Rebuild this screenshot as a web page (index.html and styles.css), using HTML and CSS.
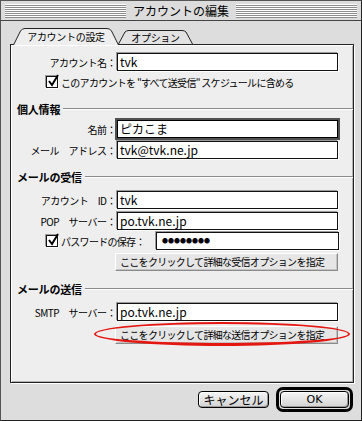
FILE: index.html
```html
<!DOCTYPE html>
<html lang="ja">
<head>
    <meta charset="UTF-8">
    <title>アカウントの編集</title>
    <link rel="stylesheet" href="styles.css">
</head>
<body>
    <div class="window">
        <div class="titlebar">
            <span class="stripes"></span>
            <span class="title">アカウントの編集</span>
            <span class="stripes"></span>
        </div>

        <div class="content">
            <div class="tabs">
                <div class="tab tab-front">
                    <svg class="tab-shape" width="106" height="17" viewBox="0 0 106 17">
                        <path d="M0.5,17 L7.5,3 Q9,0.5 12,0.5 L94,0.5 Q97,0.5 98.5,3 L105.5,17" fill="#eeeeee" stroke="#222"/>
                    </svg>
                    <span class="tab-label">アカウントの設定</span>
                </div>
                <div class="tab tab-back">
                    <svg class="tab-shape" width="75" height="16" viewBox="0 0 75 16">
                        <path d="M0.5,16 L7,4 Q8.5,2.5 11,2.5 L64,2.5 Q66.5,2.5 68,4 L74.5,16" fill="#e2e2e2" stroke="#222"/>
                    </svg>
                    <span class="tab-label">オプション</span>
                </div>
            </div>

            <div class="pane">
                <div class="row first">
                    <span class="label">アカウント名：</span>
                    <span class="field">tvk</span>
                </div>
                <div class="row check-row">
                    <span class="checkbox">
                        <svg width="14" height="14" viewBox="0 0 14 14"><path d="M3,7 L6,11 L12,1" fill="none" stroke="#000" stroke-width="2"/></svg>
                    </span>
                    <span class="check-text">このアカウントを "すべて送受信" スケジュールに含める</span>
                </div>

                <div class="section personal"><span class="section-title">個人情報</span></div>
                <div class="row name-row">
                    <span class="label">名前：</span>
                    <span class="field focused">ピカこま</span>
                </div>
                <div class="row tight">
                    <span class="label">メール　アドレス：</span>
                    <span class="field">tvk@tvk.ne.jp</span>
                </div>

                <div class="section"><span class="section-title">メールの受信</span></div>
                <div class="row after-section">
                    <span class="label">アカウント　ID：</span>
                    <span class="field">tvk</span>
                </div>
                <div class="row tight">
                    <span class="label">POP　サーバー：</span>
                    <span class="field">po.tvk.ne.jp</span>
                </div>
                <div class="row tight check-row">
                    <span class="checkbox">
                        <svg width="14" height="14" viewBox="0 0 14 14"><path d="M3,7 L6,11 L12,1" fill="none" stroke="#000" stroke-width="2"/></svg>
                    </span>
                    <span class="check-text">パスワードの保存：</span>
                    <span class="field password">●●●●●●●●</span>
                </div>
                <div class="row button-row">
                    <span class="bevel">ここをクリックして詳細な受信オプションを指定</span>
                </div>

                <div class="section"><span class="section-title">メールの送信</span></div>
                <div class="row after-section">
                    <span class="label">SMTP　サーバー：</span>
                    <span class="field">po.tvk.ne.jp</span>
                </div>
                <div class="row button-row send-row">
                    <span class="bevel">ここをクリックして詳細な送信オプションを指定</span>
                    <span class="mark"></span>
                </div>
            </div>

            <div class="buttons">
                <span class="push">キャンセル</span>
                <span class="default-ring"><span class="push ok">OK</span></span>
            </div>
        </div>
    </div>
</body>
</html>
```

FILE: styles.css
```css
body {
    margin: 0;
    font-family: "Noto Sans CJK JP", "Liberation Sans", sans-serif;
    color: #000;
    background: #fff;
}

.window {
    width: 362px;
    height: 421px;
    box-sizing: border-box;
    border: 1px solid #555;
    border-right-color: #222;
    border-bottom-color: #222;
    background: #dddddd;
    display: flex;
    flex-direction: column;
}

.titlebar {
    height: 20px;
    box-sizing: border-box;
    padding: 3px 4px;
    border-bottom: 1px solid #444;
    display: flex;
    align-items: center;
    background: #dcdcdc;
}

.stripes {
    flex: 1;
    height: 14px;
    background: repeating-linear-gradient(to bottom, #ffffff 0, #ffffff 1px, #8c8c8c 1px, #8c8c8c 2px);
}

.title {
    padding: 0 7px;
    font-size: 12px;
    line-height: 14px;
}

.content {
    padding: 7px 0 0 9px;
    display: flex;
    flex-direction: column;
}

.tabs {
    display: flex;
    align-items: flex-start;
    padding-left: 3px;
    height: 17px;
    position: relative;
    z-index: 1;
}

.tab {
    position: relative;
    height: 17px;
    display: flex;
    align-items: center;
    justify-content: center;
    font-size: 10px;
    letter-spacing: -0.3px;
}

.tab-front {
    width: 106px;
    z-index: 2;
}

.tab-back {
    width: 75px;
    height: 16px;
    margin-left: -1px;
    padding-top: 2px;
    box-sizing: border-box;
}

.tab-shape {
    position: absolute;
    left: 0;
    top: 0;
}

.tab-label {
    position: relative;
    line-height: 12px;
    padding-top: 1px;
}

.pane {
    width: 344px;
    height: 339px;
    box-sizing: border-box;
    margin-top: -1px;
    border: 1px solid #222;
    background: #eeeeee;
    box-shadow: inset 1px 1px 0 #fff, inset -1px -1px 0 #b0b0b0, 1px 1px 0 #fff;
    display: flex;
    flex-direction: column;
    font-size: 10px;
    letter-spacing: -0.7px;
}

.row {
    display: flex;
    align-items: center;
    height: 18px;
    margin-top: 2px;
}

.row.first {
    margin-top: 8px;
}

.row.name-row {
    margin-top: 4px;
}

.row.tight {
    margin-top: 3px;
}

.row.after-section {
    margin-top: 7px;
}

.label {
    width: 106px;
    box-sizing: border-box;
    padding-right: 1px;
    text-align: right;
    white-space: nowrap;
    letter-spacing: -0.5px;
}

.field {
    width: 221px;
    height: 18px;
    box-sizing: border-box;
    border: 1px solid #111;
    background: #fff;
    box-shadow: -1px -1px 0 #9a9a9a, 1px 1px 0 #fff;
    padding-left: 2px;
    font-size: 12px;
    line-height: 16px;
    letter-spacing: 0;
    white-space: nowrap;
}

.field.focused {
    border-color: #000;
    box-shadow: 0 0 0 2px #505050;
}

.field.password {
    width: 183px;
    margin-left: auto;
    margin-right: 14px;
    font-size: 6px;
    letter-spacing: 0;
    padding-left: 5px;
    line-height: 16px;
}

.check-row {
    height: 14px;
    margin-top: 4px;
}

.row.tight.check-row {
    height: 18px;
    margin-top: 2px;
}

.checkbox {
    width: 12px;
    height: 12px;
    box-sizing: border-box;
    margin-left: 35px;
    border: 1px solid #111;
    background: #fff;
    box-shadow: -1px -1px 0 #9a9a9a, 1px 1px 0 #fff;
    position: relative;
}

.checkbox svg {
    position: absolute;
    left: -1px;
    top: -3px;
}

.check-text {
    margin-left: 3px;
    white-space: nowrap;
}

.section {
    display: flex;
    align-items: center;
    height: 14px;
    margin-top: 11px;
    padding-left: 6px;
}

.section.personal {
    margin-top: 13px;
}

.section::after {
    content: "";
    flex: 1;
    margin-left: 3px;
    height: 0;
    border-top: 1px solid #8a8a8a;
    border-bottom: 1px solid #fff;
}

.section-title {
    font-weight: bold;
    font-size: 11px;
    letter-spacing: -0.2px;
}

.button-row {
    margin-top: 3px;
}

.send-row {
    margin-top: 5px;
    position: relative;
}

.bevel {
    margin-left: 104px;
    width: 223px;
    height: 18px;
    box-sizing: border-box;
    border: 1px solid #8a8a8a;
    border-top-color: #fff;
    border-left-color: #fff;
    background: #e6e6e6;
    box-shadow: inset -1px -1px 0 #c4c4c4;
    padding-left: 4px;
    line-height: 16px;
    white-space: nowrap;
}

.mark {
    position: absolute;
    left: 83px;
    top: -4px;
    width: 256px;
    height: 24px;
    box-sizing: border-box;
    border: 2px solid #e5150f;
    border-bottom-width: 3px;
    border-radius: 50%;
}

.buttons {
    display: flex;
    justify-content: flex-end;
    align-items: center;
    gap: 7px;
    width: 343px;
    margin-top: 4px;
}

.push {
    display: flex;
    align-items: center;
    justify-content: center;
    width: 71px;
    height: 17px;
    box-sizing: border-box;
    border: 1px solid #000;
    border-radius: 4px;
    background: linear-gradient(#f6f6f6, #d2d2d2);
    box-shadow: inset 1px 1px 0 #fff, inset -1px -1px 0 #9a9a9a;
    font-size: 12px;
    line-height: 15px;
}

.push.ok {
    font-family: "DejaVu Sans", sans-serif;
    font-size: 11px;
}

.default-ring {
    display: flex;
    padding: 1px;
    border: 3px solid #000;
    border-radius: 7px;
    background: #dddddd;
}

.default-ring .push {
    width: 69px;
}
```
